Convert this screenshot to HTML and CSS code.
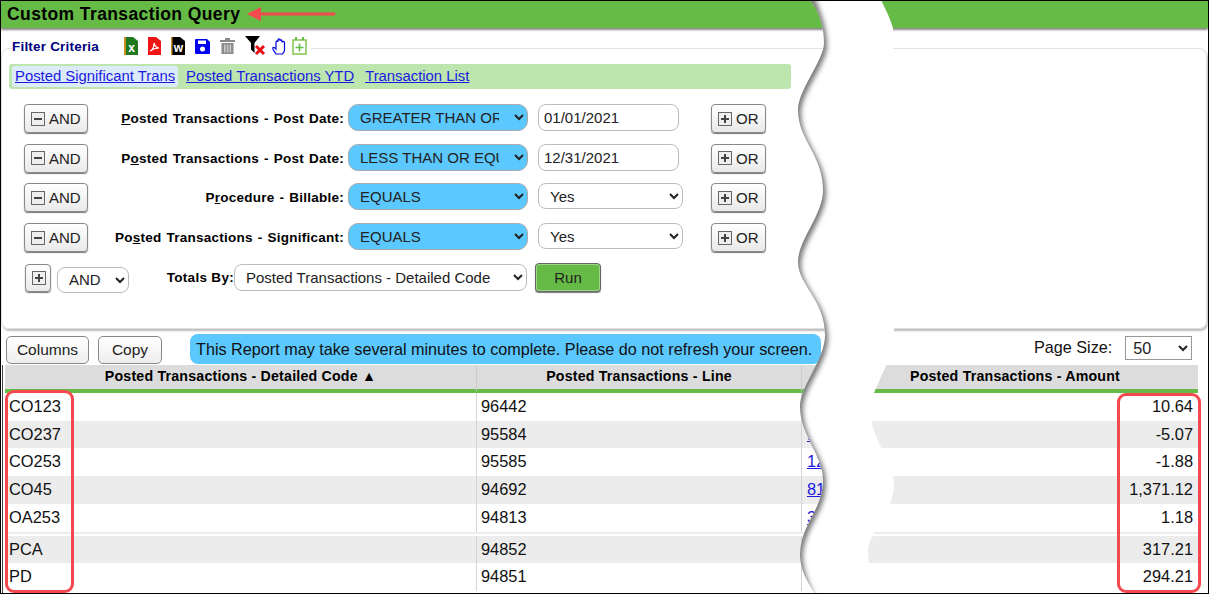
FILE: index.html
```html
<!DOCTYPE html>
<html lang="en">
    <head>
        <meta charset="UTF-8">
        <title>Custom Transaction Query</title>
        <link rel="stylesheet" href="styles.css">
    </head>
    <body>
        <div class="frame">
            <header class="title-bar">
                <h1>Custom Transaction Query</h1>
            </header>

            <fieldset class="filter">
                <legend class="filter-legend">
                    <span class="filter-title">Filter Criteria</span>
                    <span class="icons">
                        <svg width="14" height="18" viewBox="0 0 14 18"><path d="M0 0h9l5 4v14H0z" fill="#1f7a1f"/><path d="M0 0h2v18H0z" fill="#c8901e"/><text x="7.500" y="15" class="icon-letter" fill="#fff">x</text></svg>
                        <svg width="13" height="18" viewBox="0 0 13 18"><path d="M0 0h8l5 4v14H0z" fill="#f01414"/><path d="M2 14c3-1 4-5 4-8 1 3 2 5 5 5-3 0-6 1-9 3z" fill="none" stroke="#fff" stroke-width="1.2"/></svg>
                        <svg width="14" height="18" viewBox="0 0 14 18"><path d="M0 0h9l5 4v14H0z" fill="#000"/><path d="M0 0h1.500v18H0z" fill="#c8901e"/><text x="7.500" y="15" class="icon-letter" fill="#fff">w</text></svg>
                        <svg width="15" height="15" viewBox="0 0 15 15"><path d="M1 0h11l3 3v11a1 1 0 0 1-1 1H1a1 1 0 0 1-1-1V1a1 1 0 0 1 1-1z" fill="#0000f0"/><path d="M3 1.500h8v3.500H3z" fill="#fff"/><circle cx="7.500" cy="10" r="2.500" fill="#fff"/></svg>
                        <svg width="15" height="16" viewBox="0 0 15 16"><path d="M0 2h15v2H0zM5 0h5v2H5z" fill="#8a8a8a"/><path d="M1.500 5h12v11h-12z" fill="#8a8a8a"/><path d="M4 6.500h1.500v8H4zM6.800 6.500h1.500v8H6.800zM9.600 6.500h1.500v8H9.600z" fill="#ccc"/></svg>
                        <svg class="icon-filter" width="22" height="20" viewBox="0 0 22 20"><path d="M0 0h15L9.500 7v10L6 13.500V7z" fill="#000"/><path d="M11 10l8 8M19 10l-8 8" stroke="#e81010" stroke-width="3"/></svg>
                        <svg class="icon-hand" width="16" height="17" viewBox="0 0 16 17"><path d="M4 16C2 13 0 11 1 9.500c1-.5 2 .5 3 1.500V4c0-1.500 2-1.500 2 0V2c0-1.500 2-1.500 2 0v1c0-1.500 2-1.500 2 0v1.500c0-1.500 2.500-1.500 2.500 0V12c0 2-1 3-2 4z" fill="#fff" stroke="#0000e0" stroke-width="1.200"/></svg>
                        <svg width="15" height="18" viewBox="0 0 15 18"><rect x="1" y="3" width="13" height="14" fill="#fff" stroke="#8ac858" stroke-width="1.600"/><path d="M3 0h2v3H3zM10 0h2v3h-2z" fill="#66bb46"/><path d="M7.500 6.500v8M3.500 10.500h8" stroke="#66bb46" stroke-width="1.600"/></svg>
                    </span>
                </legend>

                <div class="tabs">
                    <a class="tab active" href="#">Posted Significant Trans</a>
                    <a class="tab" href="#">Posted Transactions YTD</a>
                    <a class="tab" href="#">Transaction List</a>
                </div>

                <div class="rules">
                    <div class="rule">
                        <button class="logic-btn and-btn"><span class="box-icon minus"></span>AND</button>
                        <label class="rule-label"><u>P</u>osted Transactions - Post Date:</label>
                        <select class="operator"><option>GREATER THAN OR EQUAL</option></select>
                        <div class="value"><input class="value-input" type="text" value="01/01/2021"></div>
                        <button class="logic-btn or-btn"><span class="box-icon plus"></span>OR</button>
                    </div>
                    <div class="rule">
                        <button class="logic-btn and-btn"><span class="box-icon minus"></span>AND</button>
                        <label class="rule-label">P<u>o</u>sted Transactions - Post Date:</label>
                        <select class="operator"><option>LESS THAN OR EQUAL</option></select>
                        <div class="value"><input class="value-input" type="text" value="12/31/2021"></div>
                        <button class="logic-btn or-btn"><span class="box-icon plus"></span>OR</button>
                    </div>
                    <div class="rule">
                        <button class="logic-btn and-btn"><span class="box-icon minus"></span>AND</button>
                        <label class="rule-label">P<u>r</u>ocedure - Billable:</label>
                        <select class="operator"><option>EQUALS</option></select>
                        <div class="value"><select class="value-select"><option>Yes</option></select></div>
                        <button class="logic-btn or-btn"><span class="box-icon plus"></span>OR</button>
                    </div>
                    <div class="rule">
                        <button class="logic-btn and-btn"><span class="box-icon minus"></span>AND</button>
                        <label class="rule-label">Po<u>s</u>ted Transactions - Significant:</label>
                        <select class="operator"><option>EQUALS</option></select>
                        <div class="value"><select class="value-select"><option>Yes</option></select></div>
                        <button class="logic-btn or-btn"><span class="box-icon plus"></span>OR</button>
                    </div>
                    <div class="totals">
                        <button class="logic-btn add-btn"><span class="box-icon plus"></span></button>
                        <select class="join-select"><option>AND</option></select>
                        <label class="totals-label">Totals By:</label>
                        <select class="totals-select"><option>Posted Transactions - Detailed Code</option></select>
                        <button class="run-btn">Run</button>
                    </div>
                </div>
            </fieldset>

            <div class="toolbar">
                <button class="tool-btn columns-btn">Columns</button>
                <button class="tool-btn copy-btn">Copy</button>
                <div class="notice">This Report may take several minutes to complete. Please do not refresh your screen.</div>
                <label class="page-label">Page Size:</label>
                <select class="page-select"><option>50</option></select>
            </div>

            <div class="table-wrap">
                <table class="results">
                    <thead>
                        <tr>
                            <th class="col-code">Posted Transactions - Detailed Code ▲</th>
                            <th class="col-line">Posted Transactions - Line</th>
                            <th class="col-link"></th>
                            <th class="col-amount">Posted Transactions - Amount</th>
                        </tr>
                    </thead>
                    <tbody>
                        <tr><td>CO123</td><td>96442</td><td></td><td class="num">10.64</td></tr>
                        <tr class="alt short"><td>CO237</td><td>95584</td><td><a href="#">1</a></td><td class="num">-5.07</td></tr>
                        <tr><td>CO253</td><td>95585</td><td><a href="#">12</a></td><td class="num">-1.88</td></tr>
                        <tr class="alt"><td>CO45</td><td>94692</td><td><a href="#">81</a></td><td class="num">1,371.12</td></tr>
                        <tr><td>OA253</td><td>94813</td><td><a href="#">3</a></td><td class="num">1.18</td></tr>
                        <tr class="alt thin"><td colspan="4"></td></tr>
                        <tr class="thin"><td colspan="4"></td></tr>
                        <tr class="alt short"><td>PCA</td><td>94852</td><td></td><td class="num">317.21</td></tr>
                        <tr><td>PD</td><td>94851</td><td></td><td class="num">294.21</td></tr>
                    </tbody>
                </table>
            </div>

            <!-- torn page strip, sits over everything -->
            <svg class="tear" viewBox="1 1 1207 592">
                <defs>
                    <clipPath id="stripClip">
                        <path d="M810 0C818 10 824 25 824 43C824 60 798 90 798 110C798 140 823 155 823 190C823 215 798 240 798 262C798 285 825 300 825 335C825 360 800 385 800 407C800 435 823 455 823 480C823 510 800 525 800 555C800 570 808 583 815 594L880 594C874 582 868 572 868 550C868 535 894 510 894 485C894 465 870 435 870 410C870 395 884 375 894 345L893 28C890 18 885 8 881 0Z"/>
                    </clipPath>
                    <filter id="tearBlur" x="-10%" y="-10%" width="120%" height="120%">
                        <feGaussianBlur stdDeviation="2.500"/>
                    </filter>
                </defs>
                <path fill="#fff" d="M810 0C818 10 824 25 824 43C824 60 798 90 798 110C798 140 823 155 823 190C823 215 798 240 798 262C798 285 825 300 825 335C825 360 800 385 800 407C800 435 823 455 823 480C823 510 800 525 800 555C800 570 808 583 815 594L880 594C874 582 868 572 868 550C868 535 894 510 894 485C894 465 870 435 870 410C870 395 884 375 894 345L893 28C890 18 885 8 881 0Z"/>
                <g clip-path="url(#stripClip)">
                    <path fill="#777" filter="url(#tearBlur)" transform="translate(3 3)" d="M810 -10C818 10 824 25 824 43C824 60 798 90 798 110C798 140 823 155 823 190C823 215 798 240 798 262C798 285 825 300 825 335C825 360 800 385 800 407C800 435 823 455 823 480C823 510 800 525 800 555C800 570 808 583 815 604L700 604L700 -10Z"/>
                </g>
            </svg>

            <!-- callouts -->
            <svg class="arrow" width="89" height="14" viewBox="0 0 89 14"><path d="M87 7H12" stroke="#f44a4f" stroke-width="3" stroke-linecap="round"/><path d="M0 7l14-7v14z" fill="#f44a4f"/></svg>
            <div class="callout callout-codes"></div>
            <div class="callout callout-amounts"></div>
        </div>
    </body>
</html>
```

FILE: styles.css
```css
* {
box-sizing: border-box;
}

body {
margin: 0;
padding: 0;
background-color: white;
font-family: "Liberation Sans", Arial, sans-serif;
}

.frame {
position: relative;
width: 1209px;
height: 594px;
border: 1px solid black;
overflow: hidden;
color: #111;
}

/* Title bar */
.title-bar {
height: 27px;
background-color: #66bb46;
box-shadow: 0 2px 2px #888;
padding: 3px 6px 0;
}

.title-bar h1 {
margin: 0;
font-size: 17.5px;
line-height: 20px;
color: black;
letter-spacing: 0.4px;
}

/* Filter panel */
.filter {
margin: 8px 1px 0 0;
padding: 0 8px 0 7px;
height: 293px;
min-width: 0;
border: 1px solid #e2e2e2;
border-radius: 8px;
box-shadow: 1px 2px 2px #bbb;
}

.filter-legend {
display: flex;
align-items: center;
margin-left: 3px;
padding: 0 4px 4px 0;
height: 24px;
}

.filter-title {
width: 112px;
font-size: 13.5px;
font-weight: bold;
color: #000080;
letter-spacing: 0.2px;
}

.icons {
display: flex;
align-items: center;
gap: 10px;
}

.icon-filter {
margin-right: -5px;
}

.icon-hand {
margin-right: -6px;
}

.icon-letter {
font-family: "Liberation Sans", Arial, sans-serif;
font-size: 12px;
font-weight: bold;
text-anchor: middle;
}

.tabs {
display: flex;
align-items: center;
gap: 5px;
width: 782px;
height: 25px;
margin-top: 4px;
padding-left: 3px;
background-color: #bde5ae;
border-radius: 3px;
}

.tab {
padding: 2px 3px;
font-size: 14.85px;
line-height: 17px;
color: #1a1ae0;
border-radius: 3px;
}

.tab.active {
background-color: #dcebf8;
}

/* Query rules */
.rules {
margin-top: 15px;
padding-left: 15px;
}

.rule {
display: flex;
align-items: flex-start;
height: 39.7px;
}

.logic-btn {
display: flex;
align-items: center;
height: 29px;
padding: 0;
font-family: inherit;
font-size: 15px;
color: #222;
background: linear-gradient(#fff, #e9e9e9);
border: 1px solid #888;
border-radius: 4px;
box-shadow: 0 1px 1px #777;
}

.and-btn {
width: 64px;
padding-left: 6px;
}

.or-btn {
width: 55px;
padding-left: 6px;
}

.add-btn {
width: 26px;
height: 28px;
padding-left: 6px;
}

.box-icon {
position: relative;
display: block;
width: 14px;
height: 14px;
margin-right: 4px;
border: 1px solid #666;
background-color: #eee;
flex-shrink: 0;
}

.box-icon::before {
content: "";
position: absolute;
left: 2px;
top: 5px;
width: 8px;
height: 2px;
background-color: #444;
}

.box-icon.plus::after {
content: "";
position: absolute;
left: 5px;
top: 2px;
width: 2px;
height: 8px;
background-color: #444;
}

.rule-label {
width: 256px;
padding-top: 7px;
text-align: right;
font-size: 13.5px;
line-height: 16px;
font-weight: bold;
color: black;
letter-spacing: 0.25px;
word-spacing: 1px;
}

select {
font-family: inherit;
color: #222;
}

.operator {
width: 180px;
height: 27px;
margin-left: 4px;
padding: 0 12px 0 7px;
font-size: 15px;
background-color: #5bc8ff;
border: 1px solid #aaa;
border-radius: 10px;
}

.value {
width: 173px;
margin-left: 10px;
}

.value-input {
display: block;
width: 141px;
height: 27px;
padding: 0 5px;
font-family: inherit;
font-size: 15px;
color: #222;
background-color: white;
border: 1px solid #bbb;
border-radius: 8px;
}

.value-select {
display: block;
width: 145px;
height: 26px;
padding: 0 4px 0 7px;
font-size: 15px;
background-color: white;
border: 1px solid #bbb;
border-radius: 8px;
}

.totals {
display: flex;
align-items: flex-start;
margin-top: 1px;
padding-left: 1px;
}

.join-select {
width: 72px;
height: 26px;
margin: 3px 0 0 6px;
padding-left: 7px;
font-size: 15px;
background-color: white;
border: 1px solid #bbb;
border-radius: 8px;
}

.totals-label {
width: 105px;
padding-top: 6px;
text-align: right;
font-size: 13.5px;
line-height: 16px;
font-weight: bold;
color: black;
letter-spacing: 0.3px;
}

.totals-select {
width: 293px;
height: 27px;
padding-left: 7px;
font-size: 15px;
background-color: white;
border: 1px solid #bbb;
border-radius: 8px;
}

.run-btn {
width: 66px;
height: 29px;
margin-left: 8px;
margin-top: -1px;
font-family: inherit;
font-size: 15px;
color: #222;
background-color: #66bb46;
border: 1px solid #666;
outline: 1px solid #9fd68a;
outline-offset: -2px;
border-radius: 4px;
box-shadow: 0 1px 1px #777;
}

/* Results toolbar */
.toolbar {
display: flex;
align-items: flex-start;
height: 31px;
margin-top: 5px;
padding-left: 5px;
}

.tool-btn {
height: 28px;
margin-top: 2px;
font-family: inherit;
font-size: 15.5px;
color: #222;
background: linear-gradient(#fff, #eee);
border: 1px solid #888;
border-radius: 5px;
}

.columns-btn {
width: 83px;
}

.copy-btn {
width: 64px;
margin-left: 9px;
}

.notice {
width: 631px;
height: 30px;
margin-left: 28px;
padding-left: 6px;
font-size: 16.2px;
line-height: 30px;
white-space: nowrap;
background-color: #5bc8ff;
border-radius: 8px;
}

.page-label {
margin-left: 213px;
padding-top: 3px;
font-size: 16.2px;
line-height: 20px;
}

.page-select {
width: 67px;
height: 24px;
margin: 2px 0 0 13px;
padding-left: 3px;
font-size: 16.2px;
background-color: white;
border: 1px solid #999;
}

/* Results table */
.table-wrap {
height: 229px;
margin-left: 1px;
padding-left: 2px;
border-left: 1px solid #444;
}

.results {
width: 1193px;
table-layout: fixed;
border-collapse: separate;
border-spacing: 0;
}

.results th {
height: 28px;
padding: 0 0 3px;
font-size: 14.2px;
color: black;
letter-spacing: 0.2px;
background-color: #dcdcdc;
border-bottom: 4px solid #66bb46;
border-right: 1px solid #ccc;
}

.results th:last-child {
border-right: none;
}

.col-code {
width: 472px;
}

.col-line {
width: 325px;
}

.col-link {
width: 30px;
}

.results td {
height: 28px;
padding: 0 4px 1px;
font-size: 16.4px;
color: #111;
border-right: 1px solid #d4d4d4;
}

.results td:nth-child(3) {
padding-left: 5px;
}

.results td:last-child {
border-right: none;
}

.results a {
color: #1a1ae0;
}

.results tr.alt td {
background-color: #ececec;
}

.results tr.short td {
height: 27px;
}

.results tr.thin td {
height: 2px;
padding: 0;
font-size: 0;
border-right: none;
}

.results td.num {
text-align: right;
padding-right: 5px;
}

/* Screenshot overlays */
.tear {
position: absolute;
left: 0;
top: 0;
width: 1207px;
height: 592px;
}

.arrow {
position: absolute;
left: 246px;
top: 6px;
}

.callout {
position: absolute;
border: 3px solid #f44a4f;
border-radius: 9px;
}

.callout-codes {
left: 4px;
top: 389px;
width: 69px;
height: 203px;
}

.callout-amounts {
left: 1116px;
top: 392px;
width: 84px;
height: 200px;
}
```
